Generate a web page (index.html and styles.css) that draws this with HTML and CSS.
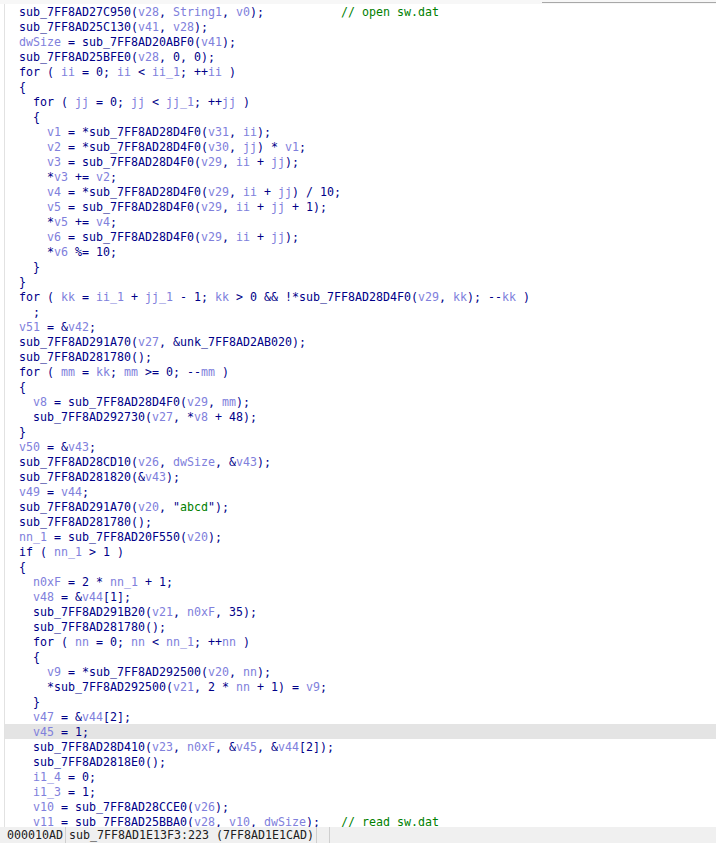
FILE: index.html
```html
<!DOCTYPE html>
<html>
<head>
<meta charset="utf-8">
<link rel="stylesheet" href="styles.css">
</head>
<body>
<div class="window">
  <div class="topbar"><div class="scroll-track"></div></div>
  <div class="code">
<div class="ln">sub_7FF8AD27C950(<span class="v">v28</span>, <span class="v">String1</span>, <span class="v">v0</span>);           <span class="cm">// open sw.dat</span></div>
<div class="ln">sub_7FF8AD25C130(<span class="v">v41</span>, <span class="v">v28</span>);</div>
<div class="ln"><span class="v">dwSize</span> = sub_7FF8AD20ABF0(<span class="v">v41</span>);</div>
<div class="ln">sub_7FF8AD25BFE0(<span class="v">v28</span>, 0, 0);</div>
<div class="ln">for ( <span class="v">ii</span> = 0; <span class="v">ii</span> &lt; <span class="v">ii_1</span>; ++<span class="v">ii</span> )</div>
<div class="ln">{</div>
<div class="ln">  for ( <span class="v">jj</span> = 0; <span class="v">jj</span> &lt; <span class="v">jj_1</span>; ++<span class="v">jj</span> )</div>
<div class="ln">  {</div>
<div class="ln">    <span class="v">v1</span> = *sub_7FF8AD28D4F0(<span class="v">v31</span>, <span class="v">ii</span>);</div>
<div class="ln">    <span class="v">v2</span> = *sub_7FF8AD28D4F0(<span class="v">v30</span>, <span class="v">jj</span>) * <span class="v">v1</span>;</div>
<div class="ln">    <span class="v">v3</span> = sub_7FF8AD28D4F0(<span class="v">v29</span>, <span class="v">ii</span> + <span class="v">jj</span>);</div>
<div class="ln">    *<span class="v">v3</span> += <span class="v">v2</span>;</div>
<div class="ln">    <span class="v">v4</span> = *sub_7FF8AD28D4F0(<span class="v">v29</span>, <span class="v">ii</span> + <span class="v">jj</span>) / 10;</div>
<div class="ln">    <span class="v">v5</span> = sub_7FF8AD28D4F0(<span class="v">v29</span>, <span class="v">ii</span> + <span class="v">jj</span> + 1);</div>
<div class="ln">    *<span class="v">v5</span> += <span class="v">v4</span>;</div>
<div class="ln">    <span class="v">v6</span> = sub_7FF8AD28D4F0(<span class="v">v29</span>, <span class="v">ii</span> + <span class="v">jj</span>);</div>
<div class="ln">    *<span class="v">v6</span> %= 10;</div>
<div class="ln">  }</div>
<div class="ln">}</div>
<div class="ln">for ( <span class="v">kk</span> = <span class="v">ii_1</span> + <span class="v">jj_1</span> - 1; <span class="v">kk</span> &gt; 0 &amp;&amp; !*sub_7FF8AD28D4F0(<span class="v">v29</span>, <span class="v">kk</span>); --<span class="v">kk</span> )</div>
<div class="ln">  ;</div>
<div class="ln"><span class="v">v51</span> = &amp;<span class="v">v42</span>;</div>
<div class="ln">sub_7FF8AD291A70(<span class="v">v27</span>, &amp;unk_7FF8AD2AB020);</div>
<div class="ln">sub_7FF8AD281780();</div>
<div class="ln">for ( <span class="v">mm</span> = <span class="v">kk</span>; <span class="v">mm</span> &gt;= 0; --<span class="v">mm</span> )</div>
<div class="ln">{</div>
<div class="ln">  <span class="v">v8</span> = sub_7FF8AD28D4F0(<span class="v">v29</span>, <span class="v">mm</span>);</div>
<div class="ln">  sub_7FF8AD292730(<span class="v">v27</span>, *<span class="v">v8</span> + 48);</div>
<div class="ln">}</div>
<div class="ln"><span class="v">v50</span> = &amp;<span class="v">v43</span>;</div>
<div class="ln">sub_7FF8AD28CD10(<span class="v">v26</span>, <span class="v">dwSize</span>, &amp;<span class="v">v43</span>);</div>
<div class="ln">sub_7FF8AD281820(&amp;<span class="v">v43</span>);</div>
<div class="ln"><span class="v">v49</span> = <span class="v">v44</span>;</div>
<div class="ln">sub_7FF8AD291A70(<span class="v">v20</span>, "<span class="str">abcd</span>");</div>
<div class="ln">sub_7FF8AD281780();</div>
<div class="ln"><span class="v">nn_1</span> = sub_7FF8AD20F550(<span class="v">v20</span>);</div>
<div class="ln">if ( <span class="v">nn_1</span> &gt; 1 )</div>
<div class="ln">{</div>
<div class="ln">  <span class="v">n0xF</span> = 2 * <span class="v">nn_1</span> + 1;</div>
<div class="ln">  <span class="v">v48</span> = &amp;<span class="v">v44</span>[1];</div>
<div class="ln">  sub_7FF8AD291B20(<span class="v">v21</span>, <span class="v">n0xF</span>, 35);</div>
<div class="ln">  sub_7FF8AD281780();</div>
<div class="ln">  for ( <span class="v">nn</span> = 0; <span class="v">nn</span> &lt; <span class="v">nn_1</span>; ++<span class="v">nn</span> )</div>
<div class="ln">  {</div>
<div class="ln">    <span class="v">v9</span> = *sub_7FF8AD292500(<span class="v">v20</span>, <span class="v">nn</span>);</div>
<div class="ln">    *sub_7FF8AD292500(<span class="v">v21</span>, 2 * <span class="v">nn</span> + 1) = <span class="v">v9</span>;</div>
<div class="ln">  }</div>
<div class="ln">  <span class="v">v47</span> = &amp;<span class="v">v44</span>[2];</div>
<div class="ln current">  <span class="v">v45</span> = 1;</div>
<div class="ln">  sub_7FF8AD28D410(<span class="v">v23</span>, <span class="v">n0xF</span>, &amp;<span class="v">v45</span>, &amp;<span class="v">v44</span>[2]);</div>
<div class="ln">  sub_7FF8AD2818E0();</div>
<div class="ln">  <span class="v">i1_4</span> = 0;</div>
<div class="ln">  <span class="v">i1_3</span> = 1;</div>
<div class="ln">  <span class="v">v10</span> = sub_7FF8AD28CCE0(<span class="v">v26</span>);</div>
<div class="ln">  <span class="v">v11</span> = sub_7FF8AD25BBA0(<span class="v">v28</span>, <span class="v">v10</span>, <span class="v">dwSize</span>);   <span class="cm">// read sw.dat</span></div>
  </div>
  <div class="status">
    <div class="cell addr">000010AD</div>
    <div class="cell loc">sub_7FF8AD1E13F3:223 (7FF8AD1E1CAD)</div>
    <div class="cell empty"></div>
  </div>
</div>
</body>
</html>
```
FILE: styles.css
```css
html, body {
  margin: 0;
  padding: 0;
  background: #ffffff;
}

.window {
  width: 716px;
  height: 843px;
  display: flex;
  flex-direction: column;
  overflow: hidden;
  font-family: "DejaVu Sans Mono", "Liberation Mono", monospace;
  font-size: 11.63px;
}

.topbar {
  height: 4px;
  flex: none;
  background: #f7f7f7;
  display: flex;
}

.scroll-track {
  margin-left: auto;
  width: 174px;
  height: 3px;
  box-sizing: border-box;
  border-bottom: 1px solid #a8a8a8;
}

.code {
  flex: 1;
  min-height: 0;
  overflow: hidden;
  margin-left: 4px;
  border-left: 1px solid #e2e2e2;
  background: #ffffff;
  color: #000088;
}

.ln {
  height: 15px;
  line-height: 17px;
  white-space: pre;
  padding-left: 14px;
}

.ln.current {
  background: #e4e4e4;
}

.v {
  color: #8080dc;
}

.cm {
  color: #008000;
}

.str {
  color: #008000;
}

.status {
  height: 16px;
  flex: none;
  background: #f0f0f0;
  display: flex;
  align-items: stretch;
  color: #202020;
  line-height: 16px;
}

.cell {
  white-space: pre;
  border-right: 1px solid #cfcfcf;
}

.addr {
  padding: 0 2px 0 7px;
}

.loc {
  padding: 0 2px 0 3px;
}

.empty {
  width: 12px;
}
```
